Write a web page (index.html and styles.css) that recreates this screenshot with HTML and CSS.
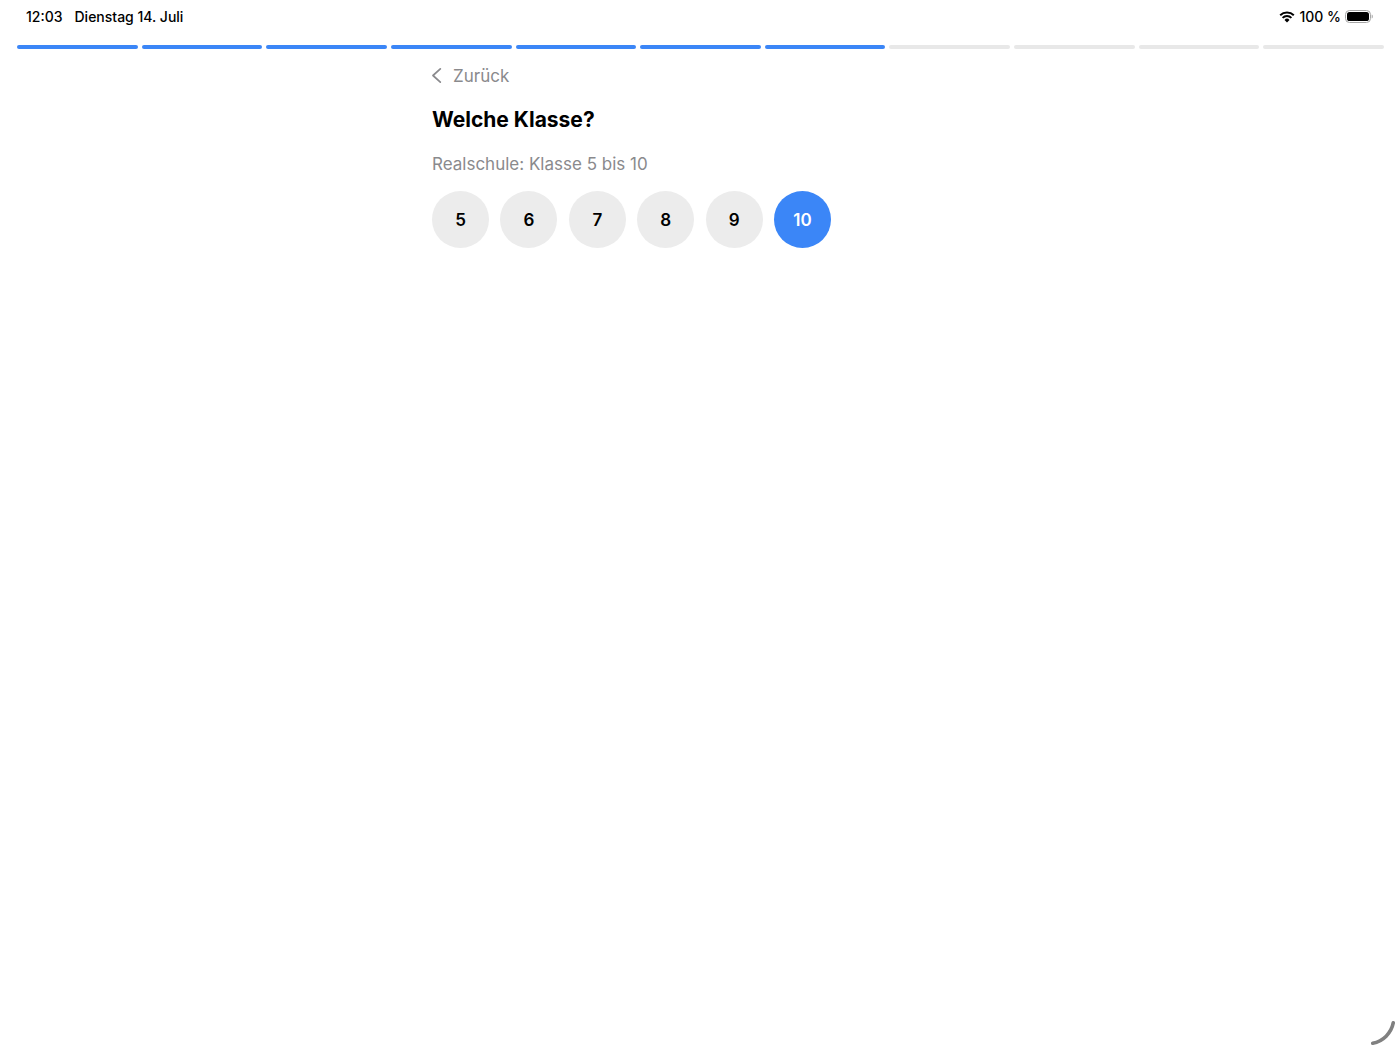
FILE: index.html
```html
<!DOCTYPE html>
<html lang="de">
<head>
  <meta charset="utf-8">
  <meta name="viewport" content="width=device-width, initial-scale=1">
  <title>Welche Klasse?</title>
  <link rel="stylesheet" href="styles.css">
</head>
<body>

<header class="status-bar">
  <div class="status-left">
    <span>12:03</span>
    <span>Dienstag 14. Juli</span>
  </div>
  <div class="status-right">
    <svg class="wifi" width="16" height="12" viewBox="0 0 16 12" aria-hidden="true">
      <path d="M1.2 4.2a9.7 9.7 0 0 1 13.6 0M3.6 6.9a6.2 6.2 0 0 1 8.8 0" fill="none" stroke="#000" stroke-width="2"/>
      <path d="M8 11.4L5.5 8.9a3.5 3.5 0 0 1 5 0z"/>
    </svg>
    <span>100 %</span>
    <svg class="battery" width="28" height="13" viewBox="0 0 28 13" aria-hidden="true">
      <rect x="0.5" y="0.5" width="25" height="12" rx="4" fill="none" stroke="#a6a6a6"/>
      <rect x="2" y="2" width="22" height="9" rx="2.6"/>
      <path d="M26.7 4.5c1.5.6 1.5 3.4 0 4z" fill="#a6a6a6"/>
    </svg>
  </div>
</header>

<div class="progress" role="progressbar" aria-label="Fortschritt" aria-valuemin="0" aria-valuemax="11" aria-valuenow="7">
  <span class="step done"></span>
  <span class="step done"></span>
  <span class="step done"></span>
  <span class="step done"></span>
  <span class="step done"></span>
  <span class="step done"></span>
  <span class="step done"></span>
  <span class="step"></span>
  <span class="step"></span>
  <span class="step"></span>
  <span class="step"></span>
</div>

<main class="content">
  <button type="button" class="back">
    <svg width="10" height="16" viewBox="0 0 10 16" aria-hidden="true">
      <path d="M8.3 0.9L1 7.5l7.3 6.6" fill="none" stroke="currentColor" stroke-width="1.7" stroke-linecap="round" stroke-linejoin="round"/>
    </svg>
    Zurück
  </button>
  <h1>Welche Klasse?</h1>
  <p class="hint">Realschule: Klasse 5 bis 10</p>
  <div class="grades">
    <button type="button" class="grade">5</button>
    <button type="button" class="grade">6</button>
    <button type="button" class="grade">7</button>
    <button type="button" class="grade">8</button>
    <button type="button" class="grade">9</button>
    <button type="button" class="grade selected" aria-pressed="true">10</button>
  </div>
</main>

<!-- corner handle -->
<svg class="corner" width="26" height="26" viewBox="0 0 26 26" aria-hidden="true">
  <path d="M23.3 2.7A26 26 0 0 1 2.7 23.3" fill="none" stroke="#808080" stroke-width="3.6" stroke-linecap="round"/>
</svg>

</body>
</html>
```

FILE: styles.css
```css
* {
  box-sizing: border-box;
}

body {
  margin: 0;
  background-color: #ffffff;
  color: #000000;
  font-family: Inter, "Liberation Sans", sans-serif;
}

button {
  padding: 0;
  border: none;
  font-family: inherit;
  cursor: pointer;
}

.status-bar {
  display: flex;
  justify-content: space-between;
  padding: 6px 27px 0 26px;
  font-size: 14px;
  font-weight: 500;
  line-height: 21px;
}

.status-left {
  display: flex;
  gap: 12px;
}

.status-right {
  display: flex;
  align-items: center;
  gap: 4px;
}

.progress {
  display: flex;
  gap: 4px;
  padding: 18px 16px 0 17px;
}

.step {
  flex: 1;
  height: 4px;
  border-radius: 2px;
  background-color: #e8e8e8;
}

.done {
  background-color: #3b86f7;
}

.content {
  max-width: 536px;
  margin: 0 auto;
  padding-top: 15px;
}

.back {
  display: flex;
  align-items: center;
  gap: 11px;
  background: none;
  color: #8a8a8d;
  font-size: 17px;
  line-height: 24px;
}

h1 {
  margin: 16px 0 0;
  font-size: 21px;
  font-weight: 700;
  line-height: 32px;
}

.hint {
  margin: 16px 0 0;
  color: #8a8a8d;
  font-size: 17px;
  line-height: 24px;
}

.grades {
  display: flex;
  justify-content: space-between;
  max-width: 399px;
  margin-top: 15px;
}

.grade {
  width: 57px;
  height: 57px;
  border-radius: 50%;
  background-color: #ececec;
  color: #000000;
  font-size: 17px;
  font-weight: 600;
}

.selected {
  background-color: #3b86f7;
  color: #ffffff;
}

.corner {
  position: fixed;
  right: 4px;
  bottom: 4px;
}
```
